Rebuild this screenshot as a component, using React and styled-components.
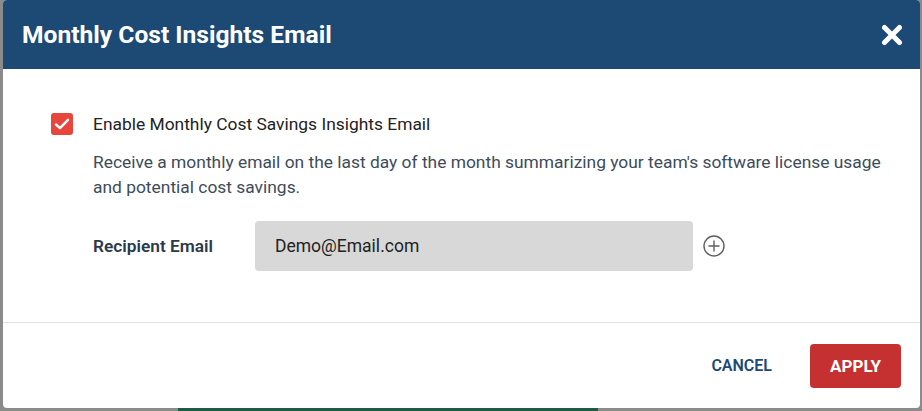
import styled, { createGlobalStyle } from "styled-components";

const GlobalStyle = createGlobalStyle`
    html, body {
        margin: 0;
        padding: 0;
        background: #8b8b8b;
        font-family: Roboto, "Liberation Sans", sans-serif;
    }
`;

export default function App() {
    return (
        <>
            <GlobalStyle />
            <SPage>
                <SDialog>
                    <SHeader>
                        <STitle>Monthly Cost Insights Email</STitle>
                        <SClose aria-label="close">
                            <svg width="22" height="22" viewBox="0 0 22 22">
                                <path d="M3.5 3.5 L18.5 18.5 M18.5 3.5 L3.5 18.5" stroke="#fff" strokeWidth="5" strokeLinecap="round" />
                            </svg>
                        </SClose>
                    </SHeader>

                    <SBody>
                        <SCheckRow>
                            <SCheckbox>
                                <svg width="18" height="18" viewBox="0 0 18 18">
                                    <path d="M3 9.5 L7 13.2 L15 4.8" fill="none" stroke="#fff" strokeWidth="2.4" strokeLinecap="round" strokeLinejoin="round" />
                                </svg>
                            </SCheckbox>
                            <SCheckLabel>Enable Monthly Cost Savings Insights Email</SCheckLabel>
                        </SCheckRow>
                        <SDescription>
                            Receive a monthly email on the last day of the month summarizing your team's software license usage
                            and potential cost savings.
                        </SDescription>

                        <SFieldRow>
                            <SFieldLabel>Recipient Email</SFieldLabel>
                            <SInput>Demo@Email.com</SInput>
                            <SAddButton aria-label="add">
                                <svg width="22" height="22" viewBox="0 0 22 22">
                                    <circle cx="11" cy="11" r="10" fill="none" stroke="#5f5f5f" strokeWidth="1.4" />
                                    <path d="M11 5.5 V16.5 M5.5 11 H16.5" stroke="#5f5f5f" strokeWidth="1.4" />
                                </svg>
                            </SAddButton>
                        </SFieldRow>
                    </SBody>

                    <SFooter>
                        <STextButton>Cancel</STextButton>
                        <SPrimaryButton>Apply</SPrimaryButton>
                    </SFooter>
                </SDialog>
                <SBackdropStrip>
                    <SGreenBar />
                </SBackdropStrip>
            </SPage>
        </>
    );
}

const SPage = styled.div`
    width: 922px;
    height: 411px;
    overflow: hidden;
    padding-left: 3px;
    box-sizing: border-box;
`;

const SDialog = styled.div`
    width: 917px;
    height: 408px;
    background: #fff;
    border-radius: 4px;
    overflow: hidden;
    display: flex;
    flex-direction: column;
`;

const SHeader = styled.div`
    height: 69px;
    flex: none;
    background: #1c4a74;
    display: flex;
    align-items: center;
    justify-content: space-between;
    padding: 0 17px 0 19px;
`;

const STitle = styled.h2`
    margin: 0;
    font-size: 24.6px;
    font-weight: 700;
    color: #fff;
    letter-spacing: 0;
`;

const SClose = styled.button`
    border: none;
    background: none;
    padding: 0;
    display: flex;
    cursor: pointer;
`;

const SBody = styled.div`
    flex: 1;
    padding: 44px 20px 0 48px;
`;

const SCheckRow = styled.div`
    display: flex;
    align-items: center;
    gap: 20px;
`;

const SCheckbox = styled.span`
    width: 22px;
    height: 22px;
    border-radius: 3px;
    background: #e8453c;
    display: flex;
    align-items: center;
    justify-content: center;
`;

const SCheckLabel = styled.span`
    font-size: 17.4px;
    color: #222;
`;

const SDescription = styled.p`
    margin: 15px 0 0 42px;
    font-size: 17.4px;
    line-height: 25px;
    color: #3e4b5b;
`;

const SFieldRow = styled.div`
    display: flex;
    align-items: center;
    margin: 21px 0 0 42px;
`;

const SFieldLabel = styled.span`
    width: 162px;
    font-size: 17.3px;
    font-weight: 600;
    color: #2b3a4a;
`;

const SInput = styled.div`
    width: 438px;
    height: 50px;
    box-sizing: border-box;
    border-radius: 4px;
    background: #d8d8d8;
    padding: 0 20px;
    display: flex;
    align-items: center;
    font-size: 17.5px;
    color: #222;
`;

const SAddButton = styled.button`
    border: none;
    background: none;
    padding: 0;
    margin-left: 10px;
    display: flex;
    cursor: pointer;
`;

const SFooter = styled.div`
    height: 86px;
    box-sizing: border-box;
    flex: none;
    border-top: 1px solid #e2e2e2;
    display: flex;
    align-items: center;
    justify-content: flex-end;
    gap: 18px;
    padding: 0 19px 0 0;
`;

const STextButton = styled.button`
    border: none;
    background: none;
    padding: 12px 20px;
    font-family: inherit;
    font-size: 16px;
    font-weight: 600;
    text-transform: uppercase;
    color: #1c4a74;
    cursor: pointer;
`;

const SPrimaryButton = styled.button`
    width: 91px;
    height: 44px;
    border: none;
    border-radius: 4px;
    background: #c53030;
    font-family: inherit;
    font-size: 17px;
    font-weight: 700;
    text-transform: uppercase;
    color: #fff;
    cursor: pointer;
`;

const SBackdropStrip = styled.div`
    height: 3px;
    padding-left: 175px;
`;

const SGreenBar = styled.div`
    width: 420px;
    height: 3px;
    background: #1f5a45;
`;
